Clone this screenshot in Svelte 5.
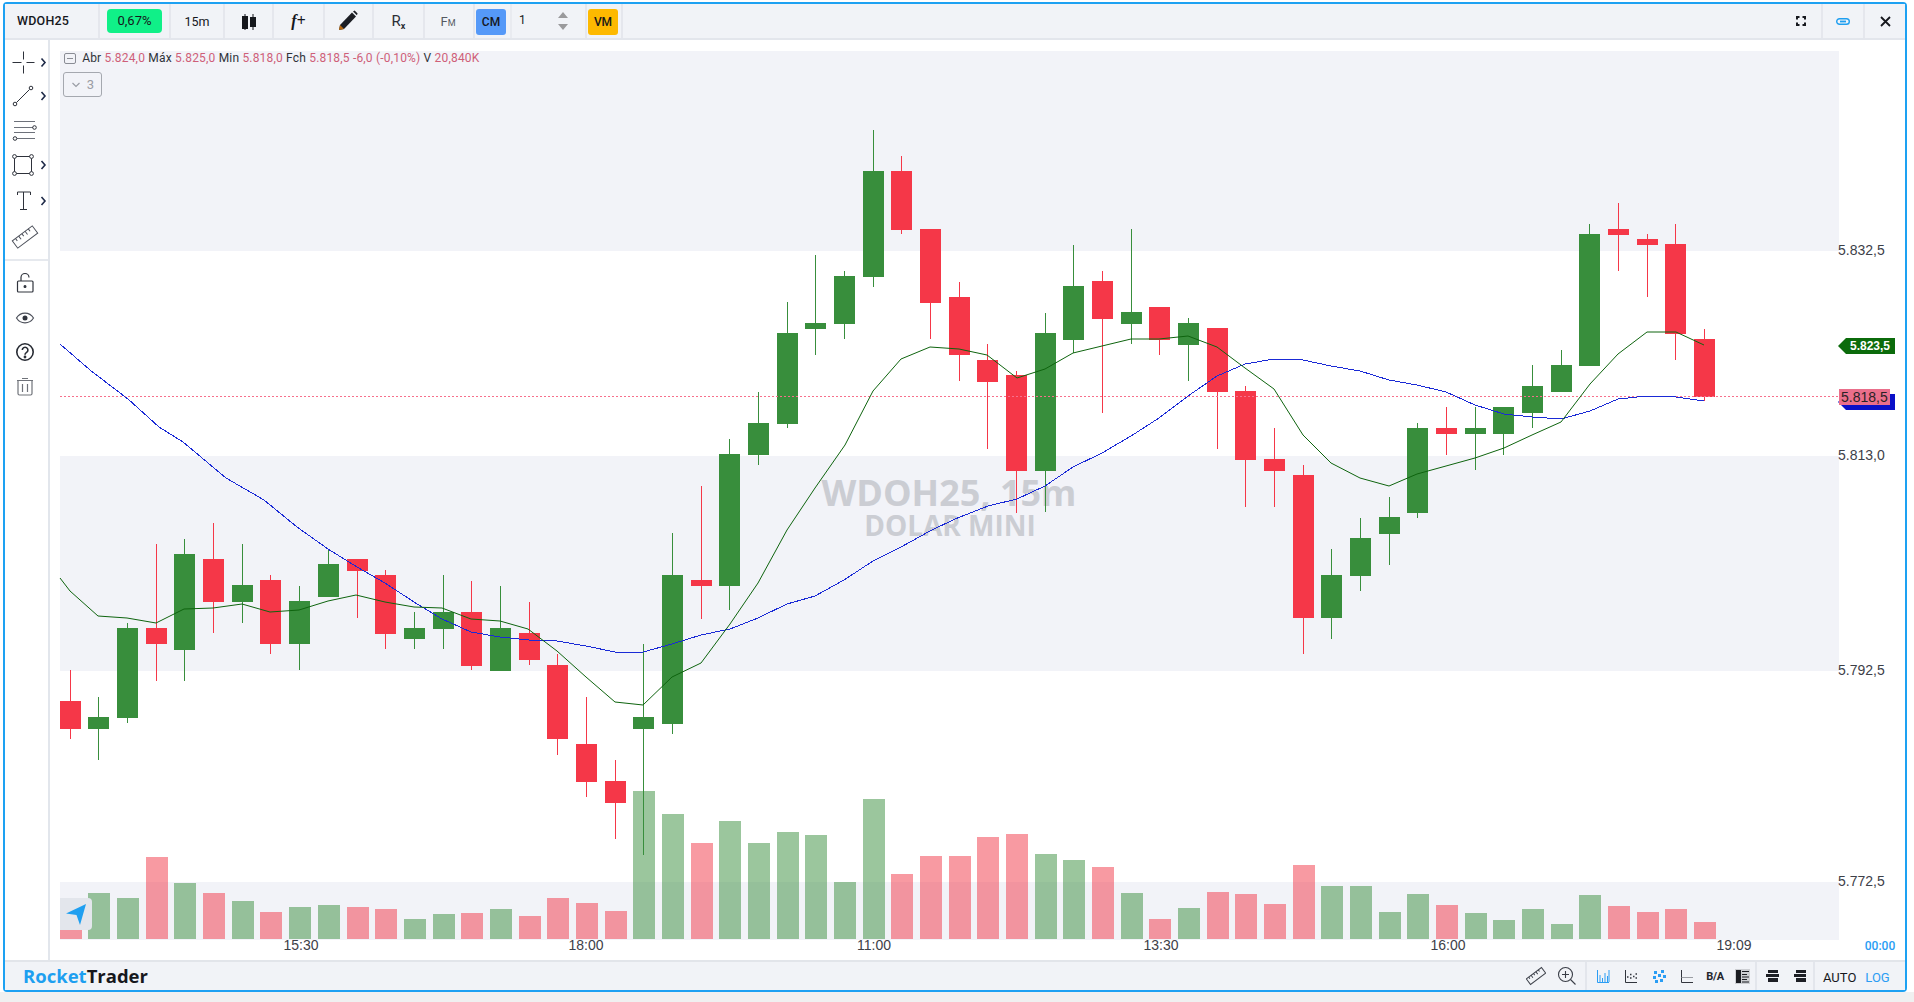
<script>
  const G = 'g', R = 'r';
  // [colour, bodyTop, bodyBottom, wickTop, wickBottom, volumeTop]
  const raw = [
    [R,701,729,670,739,920],[G,717,729,697,760,893],[G,628,718,623,723,898],[R,628,644,544,681,857],
    [G,554,650,539,681,883],[R,559,602,523,633,893],[G,585,602,544,623,901],[R,580,644,575,654,912],
    [G,601,644,586,670,907],[G,564,597,549,597,905],[R,559,571,559,618,907],[R,575,634,570,649,909],
    [G,628,639,612,649,919],[G,612,629,575,649,914],[R,612,666,581,670,913],[G,628,671,586,671,909],
    [R,633,660,602,665,916],[R,665,739,654,755,898],[R,744,782,697,797,903],[R,781,803,760,839,911],
    [G,717,729,644,855,791],[G,575,724,533,734,814],[R,580,586,486,619,843],[G,454,586,439,610,821],
    [G,423,455,392,465,843],[G,333,424,302,428,832],[G,323,329,255,355,835],[G,276,324,271,339,882],
    [G,171,277,130,287,799],[R,171,230,156,234,874],[R,229,303,229,339,856],[R,297,355,282,381,856],
    [R,360,382,344,449,837],[R,375,471,371,513,834],[G,333,471,313,512,854],[G,286,340,245,353,860],
    [R,281,319,271,413,867],[G,312,324,229,344,893],[R,307,340,307,355,919],[G,323,345,318,381,908],
    [R,328,392,328,449,892],[R,391,460,386,507,894],[R,459,471,428,507,904],[R,475,618,465,654,865],
    [G,575,618,549,639,886],[G,538,576,518,591,886],[G,517,534,497,565,912],[G,428,513,423,518,894],
    [R,428,434,407,455,905],[G,428,434,407,470,913],[G,407,434,407,455,920],[G,386,413,365,428,909],
    [G,365,392,350,392,924],[G,234,366,224,366,895],[R,229,235,203,271,906],[R,239,245,234,297,912],
    [R,244,334,224,360,909],[R,339,397,329,401,922]
  ];
  const candles = raw.map((c, i) => ({
    x: Math.floor(70.3 + 28.67 * i), up: c[0] === G,
    top: c[1], h: c[2] - c[1], wt: c[3], wh: c[4] - c[3], vt: c[5]
  }));

  const ema = '60,578 70,591 98,616 127,618 156,623 184,609 213,608 242,604 270,612 299,610 328,601 356,595 385,602 414,607 442,608 471,619 500,621 528,629 557,651 586,677 615,702 643,705 672,677 701,663 730,624 758,583 787,530 815,488 845,445 873,391 901,359 930,347 959,349 987,355 1017,378 1045,369 1073,353 1102,346 1131,339 1159,339 1188,336 1217,347 1245,368 1274,389 1303,435 1331,463 1360,478 1389,486 1417,474 1446,466 1475,458 1504,448 1532,435 1561,422 1590,384 1618,354 1647,332 1676,332 1704,345';
  const sma = '60,344 90,370 120,393 128,399 159,427 183,442 226,478 264,500 297,527 328,549 357,567 385,583 414,602 442,619 471,632 500,637 529,640 557,641 586,646 615,652 643,652 672,644 701,635 730,629 758,618 787,604 815,596 844,580 873,561 901,547 930,531 955,519 988,506 1017,499 1045,486 1073,467 1102,453 1131,436 1159,418 1188,396 1217,376 1245,364 1274,359 1303,360 1331,366 1360,371 1389,380 1417,385 1446,392 1475,405 1504,414 1532,417 1561,419 1590,411 1618,399 1647,396 1676,397 1704,401';

  const bands = [[51,200],[456,215],[882,58]];
  const axis = [['5.832,5',255],['5.813,0',460],['5.792,5',675],['5.772,5',886]];
  const times = [['15:30',301],['18:00',586],['11:00',874],['13:30',1161],['16:00',1448],['19:09',1734]];
</script>

<div class="page">
  <div class="window">
    <header class="topbar">
      <div class="cell c-symbol"><span class="symbol">WDOH25</span></div>
      <div class="cell c-pct"><span class="pct">0,67%</span></div>
      <div class="cell c-tf">15m</div>
      <div class="cell c-i1">
        <svg width="20" height="20" viewBox="238 11 20 20"><g fill="#15171c">
          <rect x="243.500" y="14" width="1" height="16"/><rect x="241" y="16" width="6" height="13"/>
          <rect x="251.500" y="14" width="1" height="16"/><rect x="249" y="17" width="6" height="10"/></g></svg>
      </div>
      <div class="cell c-i2"><span class="fplus">f+</span></div>
      <div class="cell c-i2b">
        <svg width="22" height="22" viewBox="338 11 22 22"><path d="M339 31l1-5 12-12.500 4 4L344 30z" fill="#1c1e24"/><path d="M339 31l1-5 4 4z" fill="#b8690f"/><path d="M353 12.500l1.600-.9 3 3-.7 1.600z" fill="#1c1e24"/></svg>
      </div>
      <div class="cell c-i3"><span class="rx">R<small>x</small></span></div>
      <div class="cell c-i4"><span class="fm">F<small>M</small></span></div>
      <div class="cell c-cm"><span class="cm">CM</span></div>
      <div class="cell c-qty">
        <span class="qty">1</span>
        <span class="spin">
          <svg width="12" height="18" viewBox="0 0 12 18"><path d="M6 0l5 6H1zM6 18l-5-6h10z" fill="#9a9a9c"/></svg>
        </span>
      </div>
      <div class="cell c-vm"><span class="vm">VM</span></div>
      <div class="spacer"></div>
      <div class="cell c-win">
        <svg width="10" height="10" viewBox="0 0 10 10" fill="none" stroke="#17191f" stroke-width="2"><path d="M1 3.500V1h2.500M6.500 1H9v2.500M9 6.500V9H6.500M3.500 9H1V6.500"/></svg>
      </div>
      <div class="cell c-win2">
        <svg width="14" height="7" viewBox="0 0 14 7" fill="none" stroke="#1f9ff0" stroke-width="1.400"><rect x=".7" y=".7" width="12.600" height="5.600" rx="2.800"/><path d="M4 3.500h6" stroke-width="1.800"/></svg>
      </div>
      <div class="cell c-close">
        <svg width="11" height="11" viewBox="0 0 11 11" fill="none" stroke="#16181d" stroke-width="1.800"><path d="M1 1l9 9M10 1L1 10"/></svg>
      </div>
    </header>

    <div class="middle">
      <aside class="tools">
        <div class="tool">
          <svg width="43" height="35" viewBox="5 45 43 35" fill="none" stroke="#2e323b" stroke-width="1"><path d="M12.500 62.500h9M26.500 62.500h8M23.500 51.500v8M23.500 65.500v8"/><path class="chev" d="M41.500 58.500l3.500 4-3.500 4"/></svg>
        </div>
        <div class="tool">
          <svg width="43" height="35" viewBox="5 80 43 35" fill="none" stroke="#2e323b" stroke-width="1"><circle cx="15" cy="104" r="1.800"/><circle cx="31" cy="88" r="1.800"/><path d="M16.500 102.500l13-13"/><path class="chev" d="M41.500 92l3.500 4-3.500 4"/></svg>
        </div>
        <div class="tool">
          <svg width="43" height="35" viewBox="5 115 43 35" fill="none" stroke="#6d717a" stroke-width="1"><path d="M14 121.500h21M14 127.500h19M14 132.500h21M17 138.500h18"/><circle cx="34.500" cy="127.500" r="1.800" stroke="#2e323b"/><circle cx="15" cy="138.500" r="1.800" stroke="#2e323b"/></svg>
        </div>
        <div class="tool">
          <svg width="43" height="35" viewBox="5 150 43 35" fill="none" stroke="#2e323b" stroke-width="1"><rect x="14.500" y="156.500" width="17" height="17"/><g fill="#fff"><circle cx="14.500" cy="156.500" r="1.900"/><circle cx="31.500" cy="156.500" r="1.900"/><circle cx="14.500" cy="173.500" r="1.900"/><circle cx="31.500" cy="173.500" r="1.900"/></g><path class="chev" d="M41.500 161l3.500 4-3.500 4"/></svg>
        </div>
        <div class="tool">
          <svg width="43" height="35" viewBox="5 185 43 35" fill="none" stroke="#2e323b" stroke-width="1"><path d="M17.500 195v-3h13v3M23.500 192v17M20 209.500h7"/><path class="chev" d="M41.500 197l3.500 4-3.500 4"/></svg>
        </div>
        <div class="tool">
          <svg width="43" height="35" viewBox="5 220 43 35" fill="none" stroke="#4c505a" stroke-width="1"><g transform="rotate(-37 25 237)"><rect x="12.500" y="232.500" width="25" height="9"/><path d="M16.500 232.500v3M20.500 232.500v4M24.500 232.500v3M28.500 232.500v4M32.500 232.500v3"/></g></svg>
        </div>
        <div class="divider"></div>
        <div class="tool">
          <svg width="43" height="35" viewBox="5 266 43 35" fill="none" stroke="#30343d" stroke-width="1.200"><rect x="17.500" y="281" width="15.500" height="11" rx="1"/><path d="M21 281v-3.500a4 4 0 0 1 8 0"/><circle cx="25" cy="286.500" r=".9" fill="#30343d"/></svg>
        </div>
        <div class="tool">
          <svg width="43" height="35" viewBox="5 301 43 35" fill="none" stroke="#4d515b" stroke-width="1.200"><path d="M16.500 318c4-6.500 13-6.500 17 0-4 6.500-13 6.500-17 0z"/><circle cx="25" cy="318" r="2.500" fill="#30343d" stroke="none"/></svg>
        </div>
        <div class="tool">
          <svg width="43" height="35" viewBox="5 336 43 35" fill="none" stroke="#272b33" stroke-width="1.600"><circle cx="25" cy="352" r="8.200"/><path d="M22.300 350a2.800 2.800 0 1 1 4.300 2.400c-1 .7-1.600 1.200-1.600 2.300"/><circle cx="25" cy="357" r=".6" fill="#272b33"/></svg>
        </div>
        <div class="tool">
          <svg width="43" height="35" viewBox="5 371 43 35" fill="none" stroke="#6f7279" stroke-width="1.200"><path d="M18 381v12.500a1.500 1.500 0 0 0 1.500 1.500h11a1.500 1.500 0 0 0 1.500-1.500V381M17 380.500h16M22 378.500h6M22.500 384v8M27.500 384v8"/></svg>
        </div>
      </aside>

      <div class="chart">
        <svg class="plot" width="1855" height="920" viewBox="50 40 1855 920">
          {#each bands as b}<rect class="band" x="60" y={b[0]} width="1779" height={b[1]}/>{/each}
          {#each candles as c}<rect class={c.up ? 'vol-up' : 'vol-dn'} x={c.x - 10} y={c.vt} width="22" height={939 - c.vt}/>{/each}
          <text class="wm1" x="949" y="506">WDOH25, 15m</text>
          <text class="wm2" x="950" y="536">DOLAR MINI</text>
          {#each candles as c}
            <g class={c.up ? 'c-up' : 'c-dn'}>
              <rect x={c.x} y={c.wt} width="1" height={c.wh}/>
              <rect x={c.x - 10} y={c.top} width="21" height={c.h}/>
            </g>
          {/each}
          <line class="last" x1="60" y1="396.500" x2="1839" y2="396.500"/>
          <polyline class="sma" points={sma}/>
          <polyline class="ema" points={ema}/>
          {#each axis as a}<text class="ax" x="1838" y={a[1]}>{a[0]}</text>{/each}
          {#each times as t}<text class="tm" x={t[1]} y="950">{t[0]}</text>{/each}
          <text class="zero" x="1880" y="950">00:00</text>
          <path d="M1838 346l8-8h49v16h-49z" fill="#0b6b0b"/>
          <text class="tag" x="1850" y="350">5.823,5</text>
          <path d="M1838 402l8-8h49v16h-49z" fill="#0a10c8"/>
          <rect x="1839" y="389" width="51" height="16" fill="#ea6f8b"/>
          <text class="ptag" x="1841" y="402">5.818,5</text>
        </svg>

        <div class="legend">
          <svg class="collapse" width="12" height="11" viewBox="0 0 12 11" fill="none" stroke="#8a8d95"><rect x=".5" y=".5" width="11" height="10" rx="1.500"/><path d="M3 5.500h6"/></svg>
          <span class="lbl">Abr</span> <b>5.824,0</b> <span class="lbl">Máx</span> <b>5.825,0</b> <span class="lbl">Min</span> <b>5.818,0</b> <span class="lbl">Fch</span> <b>5.818,5 -6,0 (-0,10%)</b> <span class="lbl">V</span> <b>20,840K</b>
        </div>
        <div class="more">
          <svg width="10" height="6" viewBox="0 0 10 6" fill="none" stroke="#9a9da5" stroke-width="1.200"><path d="M1.500 1l3.500 3.500L8.500 1"/></svg>
          <span>3</span>
        </div>
        <div class="nav">
          <svg width="22" height="24" viewBox="0 0 22 24"><path d="M1 11.500L21 2l-6 21-3.500-10z" fill="#1f9ff0"/></svg>
        </div>
      </div>
    </div>

    <footer class="bottombar">
      <div class="brand"><span class="rocket">Rocket</span><span class="trader">Trader</span></div>
      <div class="spacer"></div>
      <div class="group g-a">
        <div class="bi wide">
          <svg width="20" height="20" viewBox="0 0 20 20" fill="none" stroke="#3f434c"><g transform="rotate(-37 10 10)"><rect x="0.500" y="6.500" width="19" height="7"/><path d="M3.500 6.500v2M6.500 6.500v3M9.500 6.500v2M12.500 6.500v3M15.500 6.500v2"/></g></svg>
        </div>
        <div class="bi wide">
          <svg width="20" height="20" viewBox="0 0 20 20" fill="none" stroke="#3a3e47" stroke-width="1.100"><circle cx="8.500" cy="8.500" r="7"/><path d="M8.500 5v7M5 8.500h7M13.500 13.500l5 5"/></svg>
        </div>
      </div>
      <div class="group g-b">
        <div class="bi">
          <svg width="14" height="14" viewBox="0 0 14 14" fill="none" stroke="#2a9df4"><path d="M1.500 1v12.500H13M4 6v7M6.500 9v4M9 4v9M11.500 7v6M13 1v12"/></svg>
        </div>
        <div class="bi">
          <svg width="14" height="14" viewBox="0 0 14 14" fill="none" stroke="#30343c"><path d="M1.500 1v12.500H13"/><path d="M3 8h1.500M6 5.500h1.500M6 9h1.500M9 7.500h1.500M11.500 5h1.500M11.500 9h1.500" stroke-width="1.500"/></svg>
        </div>
        <div class="bi">
          <svg width="13" height="13" viewBox="0 0 13 13" fill="#2a9df4"><rect x="1" y="1" width="3" height="3"/><rect x="8" y="0" width="3" height="3"/><rect x="5" y="4" width="3" height="3"/><rect x="0" y="6" width="3" height="3"/><rect x="10" y="5" width="3" height="3"/><rect x="2" y="10" width="3" height="3"/><rect x="7" y="9" width="3" height="3"/></svg>
        </div>
        <div class="bi">
          <svg width="14" height="14" viewBox="0 0 14 14" fill="none" stroke="#33363e"><path d="M1.500 1v12.500H13"/><path d="M1.500 8.500H13" stroke="#9a9da3"/></svg>
        </div>
        <div class="bi"><span class="ba">B/A</span></div>
        <div class="bi last-b">
          <svg width="15" height="15" viewBox="0 0 15 15"><rect width="15" height="15" fill="#cdcfd3"/><rect x="1" y="1" width="5" height="13" fill="#1b1d22"/><path d="M7 2.500h7M7 5.500h5M7 8h7M7 10.500h5M7 13h7" stroke="#1b1d22" fill="none"/></svg>
        </div>
      </div>
      <div class="group g-c">
        <div class="bi">
          <svg width="14" height="14" viewBox="0 0 14 14" fill="#1d1f25"><rect x="2" y="1" width="10" height="3"/><rect x="0" y="5" width="13" height="3"/><rect x="2" y="9" width="10" height="4"/></svg>
        </div>
        <div class="bi">
          <svg width="14" height="14" viewBox="0 0 14 14" fill="#1d1f25"><rect x="3" y="1" width="10" height="3"/><rect x="1" y="5" width="12" height="3"/><rect x="3" y="9" width="10" height="4"/></svg>
        </div>
      </div>
      <div class="scale"><span class="auto">AUTO</span><span class="log">LOG</span></div>
    </footer>
  </div>
  <div class="strip"></div>
</div>

<style>
  :global(body) { margin: 0; background: #fff; }
  .page { width: 1914px; height: 1002px; display: flex; flex-direction: column; font-family: Roboto, "Liberation Sans", sans-serif; overflow: hidden; }
  .window { box-sizing: border-box; width: 1904px; height: 990px; margin: 2px 7px 0 3px; border: 2px solid #1da1f2; border-radius: 4px; display: flex; flex-direction: column; background: #fff; }
  .strip { flex: 1; background: #f0f0f0; }

  .topbar { height: 36px; box-sizing: border-box; display: flex; background: #f1f3f7; border-bottom: 2px solid #e3e6ec; color: #15171c; font-size: 12px; }
  .cell { box-sizing: border-box; display: flex; align-items: center; justify-content: center; border-right: 2px solid #e5e7ed; flex: none; }
  .spacer { flex: 1; }
  .c-symbol { width: 95px; justify-content: flex-start; padding-left: 12px; padding-bottom: 2px; }
  .symbol { font-size: 12.500px; font-weight: 500; letter-spacing: .2px; }
  .c-pct { width: 71px; }
  .pct { width: 55px; height: 24px; line-height: 24px; text-align: center; border-radius: 4px; background: #10f088; font-size: 13px; }
  .c-tf { width: 54px; font-size: 12.500px; }
  .c-i1 { width: 49px; }
  .c-i2 { width: 51px; }
  .c-i2b { width: 49px; }
  .c-i3 { width: 51px; }
  .c-i4 { width: 50px; }
  .fplus { font: italic bold 16px "Liberation Serif", serif; }
  .rx { font: 15px Roboto, sans-serif; color: #2b2e36; }
  .rx small { font-size: 9px; font-weight: 700; vertical-align: -3px; }
  .fm { font: 13px Roboto, sans-serif; color: #555962; margin-right: 2px; }
  .fm small { font-size: 9px; }
  .c-cm { width: 35px; border-right: 0; justify-content: flex-start; padding-left: 1px; }
  .cm, .vm { width: 30px; height: 26px; line-height: 26px; text-align: center; border-radius: 3px; font-size: 12px; font-weight: 500; margin-top: 2px; }
  .cm { background: #5599f8; }
  .c-qty { width: 77px; justify-content: space-between; padding: 0 16px 2px 7px; border-left: 2px solid #e9ebf0; }
  .qty { font-size: 12px; }
  .spin { display: flex; margin-top: 2px; }
  .c-vm { width: 36px; justify-content: flex-start; padding-left: 1px; }
  .vm { background: #fdb900; }
  .c-win { width: 40px; padding-right: 2px; }
  .c-win2 { width: 42px; padding-right: 1px; }
  .c-close { width: 40px; border-right: 0; }

  .middle { height: 920px; display: flex; }
  .tools { box-sizing: border-box; width: 45px; border-right: 2px solid #e2e6ec; padding-top: 5px; flex: none; background: #fff; }
  .tool { height: 35px; }
  .tool svg { display: block; }
  .chev { stroke: #1e2a48; stroke-width: 1.600; }
  .divider { height: 2px; background: #e6e9ee; margin: 4px 0 5px; }

  .chart { position: relative; flex: 1; overflow: hidden; }
  .plot { display: block; }
  .band { fill: #f2f3f8; }
  .vol-up { fill: #388e3c; opacity: .5; }
  .vol-dn { fill: #f23645; opacity: .5; }
  .c-up { fill: #388e3c; }
  .c-dn { fill: #f53748; }
  .plot rect { shape-rendering: crispEdges; }
  .sma, .ema { fill: none; stroke-width: 1; }
  .sma { stroke: #1a2ad6; shape-rendering: crispEdges; }
  .ema { stroke: #0e640e; }
  .last { stroke: #f7708c; stroke-width: 1; stroke-dasharray: 2 2; }
  .wm1, .wm2 { font-family: "Open Sans", sans-serif; font-weight: 700; fill: #cbcdd3; text-anchor: middle; }
  .wm1 { font-size: 36px; }
  .wm2 { font-size: 28px; }
  .ax, .tm, .ptag { font: 14px "Liberation Sans", sans-serif; fill: #3d4048; }
  .tm { text-anchor: middle; }
  .ptag { fill: #2a2226; }
  .zero { font: 500 12px Roboto, sans-serif; fill: #2a9df4; text-anchor: middle; }
  .tag { font: bold 12px "Liberation Sans", sans-serif; fill: #fff; }

  .legend { position: absolute; left: 14px; top: 11px; display: flex; align-items: center; gap: 3.200px; font-size: 12px; letter-spacing: .18px; line-height: 14px; color: #2f3238; white-space: pre; }
  .legend b { font-weight: 400; color: #cf5f78; }
  .collapse { margin-right: 3px; }
  .more { position: absolute; left: 13px; top: 32px; box-sizing: border-box; width: 39px; height: 25px; border: 1px solid #a5a8af; border-radius: 3px; display: flex; align-items: center; justify-content: center; gap: 6px; color: #9a9da5; font-size: 13px; }
  .nav { position: absolute; left: 10px; top: 858px; width: 32px; height: 32px; background: #e3e6ec; border-radius: 0 4px 4px 0; display: flex; align-items: center; justify-content: center; }

  .bottombar { height: 30px; box-sizing: border-box; border-top: 2px solid #e2e5ea; background: #f1f3f7; display: flex; align-items: stretch; }
  .brand { font: 700 18.500px "Open Sans", sans-serif; line-height: 28px; margin-left: 18px; }
  .rocket { color: #1d9ff0; }
  .trader { color: #17181d; }
  .group { display: flex; border-right: 2px solid #e3e6ec; box-sizing: border-box; }
  .bi { width: 28px; display: flex; align-items: center; justify-content: center; box-sizing: border-box; }
  .bi.wide { width: 31px; }
  .g-a { padding-right: 3px; }
  .g-b { padding-left: 2px; }
  .last-b { width: 26px; }
  .g-c { padding-left: 2px; }
  .g-c .bi { width: 27px; padding-left: 1px; }
  .ba { font-size: 11px; font-weight: 700; color: #23252b; letter-spacing: -.4px; }
  .scale { width: 90px; box-sizing: border-box; padding: 2px 0 0 8px; display: flex; gap: 9px; align-items: center; font-size: 13px; }
  .auto { color: #15171c; }
  .log { color: #2a9df4; }
</style>
